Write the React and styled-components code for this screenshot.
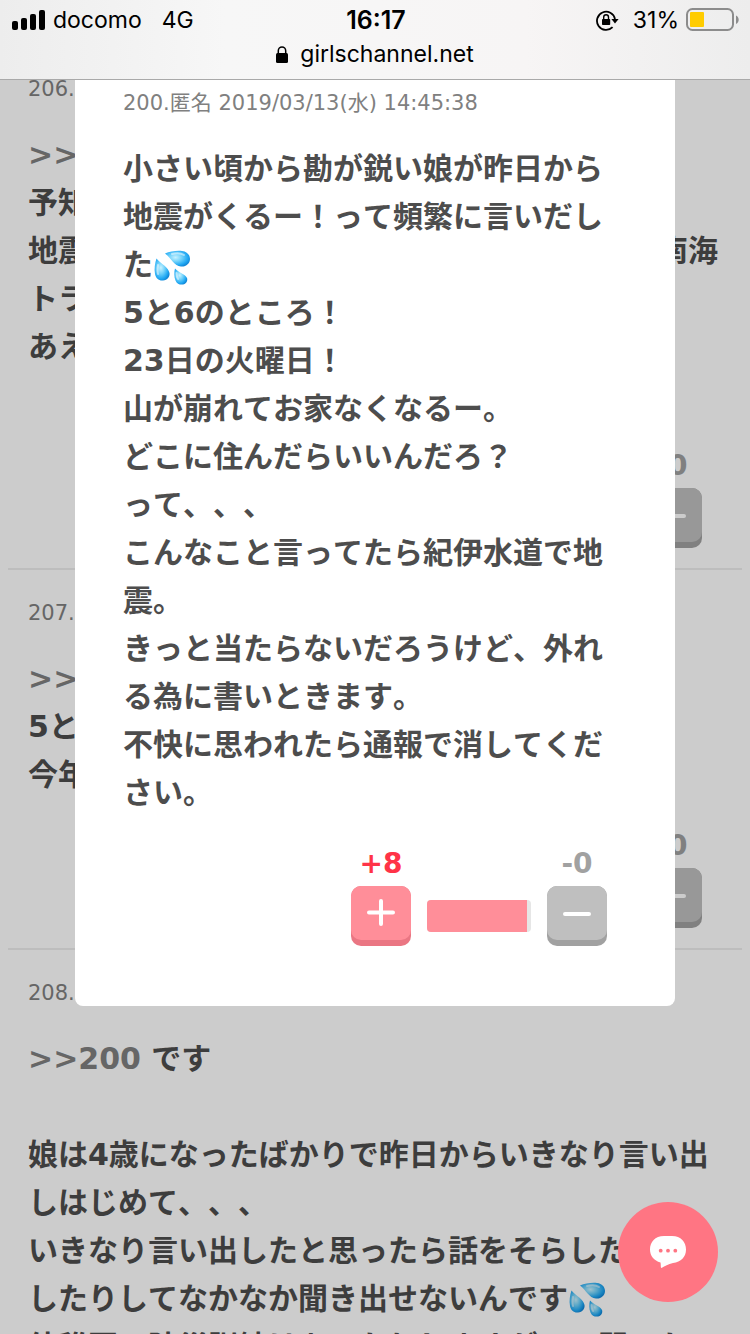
import React from "react";
import styled, { createGlobalStyle } from "styled-components";

const GlobalStyle = createGlobalStyle`
    * {
        box-sizing: border-box;
    }

    body {
        margin: 0;
        background-color: #fff;
        color: #4d4d4d;
        font-family: "DejaVu Sans", "Noto Sans CJK JP", sans-serif;
    }
`;

const Screen = styled.div`
    display: flex;
    flex-direction: column;
    height: 100vh;
    overflow: hidden;
`;

const BrowserHeader = styled.header`
    flex-shrink: 0;
    height: 80px;
    background: linear-gradient(90deg, #ededed, #f7f7f7 30%, #f7f5f5 70%, #ededed);
    border-bottom: 1px solid #a9a9a9;
    color: #000;
    font-family: Inter, "Noto Sans CJK JP", sans-serif;
    font-size: 23px;
`;

const StatusBar = styled.div`
    display: grid;
    grid-template-columns: 1fr auto 1fr;
    align-items: center;
    height: 40px;
    padding: 0 10px 0 12px;
`;

const StatusGroup = styled.div`
    display: flex;
    align-items: center;
    justify-content: ${({ $end }) => ($end ? "flex-end" : "flex-start")};
    gap: ${({ $gap }) => $gap}px;
`;

const Clock = styled.time`
    font-size: 25px;
    font-weight: 600;
`;

const AddressBar = styled.div`
    display: flex;
    justify-content: center;
    align-items: center;
    gap: 12px;
    height: 28px;
`;

const Page = styled.div`
    position: relative;
    flex: 1;
    min-height: 0;
    overflow: hidden;
`;

/* The list is scrolled a little past the top of comment 206. */
const CommentList = styled.main`
    margin: -34px 8px 0;
`;

const Comment = styled.article`
    padding: 29px 20px 20px;
    border-bottom: 2px solid #ededed;
`;

const Meta = styled.div`
    margin-bottom: 28px;
    color: #808080;
    font-size: 21px;
    line-height: 28px;
`;

const Body = styled.div`
    padding-right: 4px;
    font-size: 30px;
    font-weight: bold;
    font-kerning: none;
    line-height: 48px;
    text-spacing-trim: space-all;
`;

const Line = styled.p`
    display: flex;
    justify-content: ${({ $spread }) => ($spread ? "space-between" : "flex-start")};
    min-height: 48px;
    margin: 0;
    white-space: pre;
`;

const Text = styled.p`
    margin: 0;
`;

const Anchor = styled.a`
    color: #808080;
    text-decoration: none;
`;

const Votes = styled.div`
    display: flex;
    justify-content: flex-end;
    align-items: flex-end;
    gap: 16px;
    margin-top: 33px;
    padding-right: 20px;
`;

const Vote = styled.div`
    display: flex;
    flex-direction: column;
    align-items: center;
    gap: 8px;
    width: 60px;
`;

const Count = styled.span`
    color: ${({ $plus }) => ($plus ? "#ff3347" : "#a1a1a1")};
    font-size: 28px;
    font-weight: bold;
    line-height: 28px;
`;

const VoteButton = styled.button`
    display: block;
    width: 60px;
    height: 60px;
    padding: 0;
    border: 0;
    border-radius: 10px;
    background-color: ${({ $plus }) => ($plus ? "#ea7683" : "#a1a1a1")};
`;

const ButtonFace = styled.span`
    display: flex;
    justify-content: center;
    align-items: center;
    height: 54px;
    margin-bottom: 6px;
    border-radius: 10px;
    background-color: ${({ $plus }) => ($plus ? "#ff8e99" : "#bfbfbf")};
`;

const Bar = styled.div`
    width: 104px;
    height: 32px;
    margin-bottom: 14px;
    border-radius: 4px;
    background-color: #e6e6e6;
    overflow: hidden;
`;

const BarFill = styled.div`
    height: 100%;
    background-color: #ff8e99;
`;

const Overlay = styled.div`
    position: absolute;
    inset: 0;
    background-color: rgba(0, 0, 0, 0.2);
`;

const Modal = styled.section`
    position: absolute;
    top: 0;
    left: 10%;
    width: 80%;
    padding: 9px 48px 60px;
    border-radius: 0 0 8px 8px;
    background-color: #fff;
`;

const WriteButton = styled.button`
    position: absolute;
    right: 32px;
    bottom: 32px;
    display: flex;
    justify-content: center;
    align-items: center;
    width: 100px;
    height: 100px;
    padding: 0;
    border: 0;
    border-radius: 50%;
    background-color: #ff7583;
`;

const EmojiSvg = styled.svg`
    display: inline-block;
    vertical-align: middle;
    align-self: center;
    flex-shrink: 0;
`;

const Sweat = ({ id }) => (
    <EmojiSvg width="38" height="38" viewBox="-1 0 38 38" role="img" aria-label="汗">
        <defs>
            <radialGradient id={id} cx="42%" cy="42%" r="62%">
                <stop offset="0" stopColor="#c8f2ff" />
                <stop offset="0.4" stopColor="#74d3fb" />
                <stop offset="0.8" stopColor="#20a8f3" />
                <stop offset="1" stopColor="#1288d8" />
            </radialGradient>
        </defs>
        <g fill={`url(#${id})`}>
            <path d="M11 5.5C16 3.500 22 2.500 28 3C33 3.500 36 7 36 11C36 15.500 32 19 27 18.500C20 18 17 10 11 5.500Z" />
            <path d="M2.500 10.500C1 15 0 21 1 26C2 30.500 5 33 9 32.500C13.500 32 16 29 15.500 25C14.500 19 7 16 2.500 10.500Z" />
            <path d="M21 20.500C20 24 20 29 21.500 32.500C23 36 26 37 29 36.500C32 36 34 33 33 30C31.500 26 25 25 21 20.500Z" />
        </g>
        <g fill="none" stroke="#fff" strokeOpacity="0.5" strokeWidth="2" strokeLinecap="round">
            <path d="M18 6C22 5 27 5 30 7" />
            <path d="M4 17C3.500 20 3 23 4 26" />
            <path d="M22.500 25C22.500 27 22.500 29 24 31" />
        </g>
    </EmojiSvg>
);

const SignalIcon = () => (
    <svg width="34" height="20" viewBox="0 0 34 20" aria-hidden="true">
        <rect x="0" y="11" width="6" height="9" rx="2" />
        <rect x="9" y="8" width="6" height="12" rx="2" />
        <rect x="18" y="4" width="6" height="16" rx="2" />
        <rect x="27" y="0" width="6" height="20" rx="2" />
    </svg>
);

const RotationLockIcon = () => (
    <svg width="23" height="21" viewBox="0 0 23 21" aria-hidden="true">
        <path d="M16.6 17.2A9.1 9.1 0 1 1 19 9" fill="none" stroke="#000" strokeWidth="1.8" />
        <path d="M15.4 9H22.6L19 13.4Z" />
        <rect x="6" y="9" width="8.2" height="6" rx="0.8" />
        <path d="M7.7 9V7.2a2.4 2.4 0 0 1 4.8 0V9" fill="none" stroke="#000" strokeWidth="1.4" />
    </svg>
);

const BatteryIcon = () => (
    <svg width="54" height="24" viewBox="0 0 54 24" aria-hidden="true">
        <rect x="1" y="1" width="46" height="21" rx="5.5" fill="none" stroke="#8c8c8c" strokeWidth="2" />
        <rect x="4" y="4" width="14" height="15" rx="1" fill="#fc0" />
        <path d="M50 7.5C53.6 9 53.6 14.5 50 16Z" fill="#8c8c8c" />
    </svg>
);

const LockIcon = () => (
    <svg width="12" height="17" viewBox="0 0 12 17" aria-hidden="true">
        <rect x="0" y="7" width="12" height="10" rx="1.5" />
        <path d="M2.3 8V4.7a3.7 3.7 0 0 1 7.4 0V8" fill="none" stroke="#000" strokeWidth="1.5" />
    </svg>
);

const SignIcon = ({ plus }) => (
    <svg width="28" height="28" viewBox="0 0 28 28" aria-hidden="true">
        <path
            d={plus ? "M2 13.5H26M14 2V25" : "M2 15H26"}
            stroke="#fff"
            strokeWidth="4"
            strokeLinecap="round"
        />
    </svg>
);

const BubbleIcon = () => (
    <svg width="36" height="32" viewBox="0 0 36 32" aria-hidden="true">
        <path
            d="M14 0H22C31 0 36 6 36 13.5C36 21 31 26 23 27C18 28 15 30 11.5 32C10.5 32 11 29 10.5 26.5C4 24.5 0 20 0 13.5C0 6 5 0 14 0Z"
            fill="#fff"
        />
        <circle cx="10.7" cy="14.7" r="1.9" fill="#ff7583" />
        <circle cx="18" cy="14.7" r="1.9" fill="#ff7583" />
        <circle cx="25.3" cy="14.7" r="1.9" fill="#ff7583" />
    </svg>
);

const MinusVote = () => (
    <Vote>
        <Count>-0</Count>
        <VoteButton type="button" aria-label="マイナス">
            <ButtonFace>
                <SignIcon />
            </ButtonFace>
        </VoteButton>
    </Vote>
);

const plus = 8;
const plusRate = 96;

const App = () => {
    return (
        <Screen>
            <GlobalStyle />
            <BrowserHeader>
                <StatusBar>
                    <StatusGroup $gap={20}>
                        <StatusGroup $gap={7}>
                            <SignalIcon />
                            <span>docomo</span>
                        </StatusGroup>
                        <span>4G</span>
                    </StatusGroup>
                    <Clock>16:17</Clock>
                    <StatusGroup $gap={14} $end>
                        <RotationLockIcon />
                        <StatusGroup $gap={7}>
                            <span>31%</span>
                            <BatteryIcon />
                        </StatusGroup>
                    </StatusGroup>
                </StatusBar>
                <AddressBar>
                    <LockIcon />
                    <span>girlschannel.net</span>
                </AddressBar>
            </BrowserHeader>

            <Page>
                <CommentList>
                    <Comment>
                        <Meta>206.</Meta>
                        <Body>
                            <Line><Anchor href="#c200">&gt;&gt;</Anchor></Line>
                            <Line>予知</Line>
                            <Line $spread><span>地震</span><span>南海</span></Line>
                            <Line>トラ</Line>
                            <Line>あえ</Line>
                            <Line />
                        </Body>
                        <Votes>
                            <MinusVote />
                        </Votes>
                    </Comment>
                    <Comment>
                        <Meta>207.</Meta>
                        <Body>
                            <Line><Anchor href="#c200">&gt;&gt;</Anchor></Line>
                            <Line>5と</Line>
                            <Line>今年</Line>
                        </Body>
                        <Votes>
                            <MinusVote />
                        </Votes>
                    </Comment>
                    <Comment>
                        <Meta>208.</Meta>
                        <Body>
                            <Line><Anchor href="#c200">&gt;&gt;200</Anchor> です</Line>
                            <Line />
                            <Text>娘は4歳になったばかりで昨日からいきなり言い出しはじめて、、、</Text>
                            <Line>いきなり言い出したと思ったら話をそらした</Line>
                            <Line>したりしてなかなか聞き出せないんです<Sweat id="drop-list" /></Line>
                            <Line>幼稚園で防災訓練はあったりしますが、、聞いた</Line>
                        </Body>
                    </Comment>
                </CommentList>

                <Overlay />

                <Modal role="dialog" aria-label="200" id="c200">
                    <Meta>200.匿名 2019/03/13(水) 14:45:38</Meta>
                    <Body>
                        <Text>
                            小さい頃から勘が鋭い娘が昨日から地震がくるー！って頻繁に言いだした<Sweat id="drop-modal" />
                        </Text>
                        <Text>5と6のところ！</Text>
                        <Text>23日の火曜日！</Text>
                        <Text>山が崩れてお家なくなるー。</Text>
                        <Text>どこに住んだらいいんだろ？</Text>
                        <Text>って、、、</Text>
                        <Text>こんなこと言ってたら紀伊水道で地震。</Text>
                        <Text>きっと当たらないだろうけど、外れる為に書いときます。</Text>
                        <Text>不快に思われたら通報で消してください。</Text>
                    </Body>
                    <Votes>
                        <Vote>
                            <Count $plus>+{plus}</Count>
                            <VoteButton type="button" aria-label="プラス" $plus>
                                <ButtonFace $plus>
                                    <SignIcon plus />
                                </ButtonFace>
                            </VoteButton>
                        </Vote>
                        <Bar>
                            <BarFill style={{ width: `${plusRate}%` }} />
                        </Bar>
                        <MinusVote />
                    </Votes>
                </Modal>

                <WriteButton type="button" aria-label="コメント">
                    <BubbleIcon />
                </WriteButton>
            </Page>
        </Screen>
    );
};

export default App;
